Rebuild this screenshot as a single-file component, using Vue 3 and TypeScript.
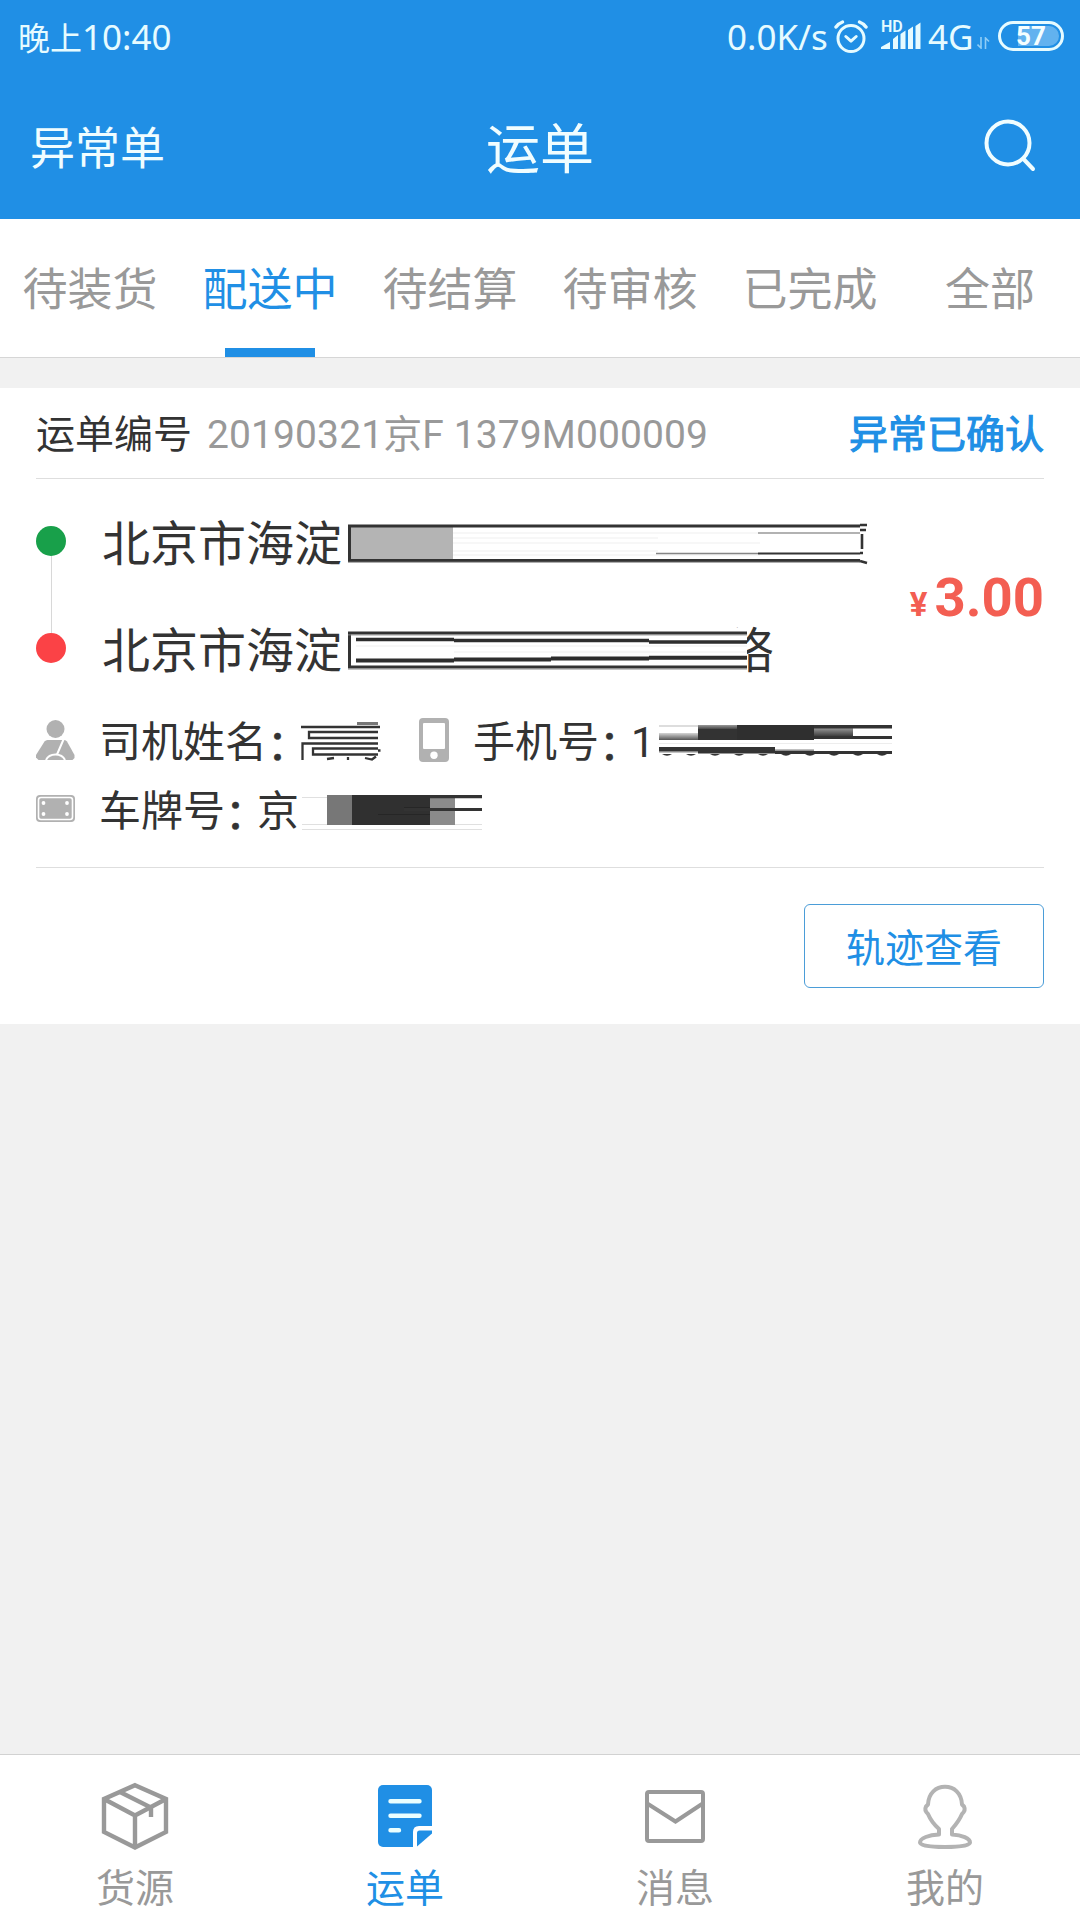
<script setup lang="ts">
import { ref } from 'vue'

interface NavItem {
  key: string
  label: string
}

const tabs: string[] = ['待装货', '配送中', '待结算', '待审核', '已完成', '全部']
const activeTab = ref(1)

const navItems: NavItem[] = [
  { key: 'goods', label: '货源' },
  { key: 'waybill', label: '运单' },
  { key: 'message', label: '消息' },
  { key: 'mine', label: '我的' },
]
const activeNav = ref('waybill')

const digitArcs: number[] = [8, 32, 56, 80, 104, 127, 151, 175, 199, 223]
</script>

<template>
  <div class="screen">
    <header class="header">
      <div class="status">
        <div class="clock"><span class="clock-cn">晚上</span>10:40</div>
        <div class="status-right">
          <span class="speed">0.0K/s</span>
          <svg class="alarm" width="34" height="34" viewBox="0 0 34 34" fill="none" stroke="#e6fbff" stroke-width="3" stroke-linecap="round" stroke-linejoin="round">
            <circle cx="17" cy="18.5" r="13" />
            <path d="M11.8 16.5l5.2 4.7 5.2-4.7" />
            <path d="M2 7q2.6-3.600 6.500-5M32 7q-2.600-3.600-6.500-5" stroke-width="3.400" />
          </svg>
          <div class="signal">
            <svg width="40" height="28" viewBox="0 0 40 28" fill="#e6fbff">
              <path d="M0 27v-2l9-5v7zM12 27V17l5-4v14zM19.500 27V12l5-3.500v18.500zM27 27V8l5-3.500v22.500zM34.500 27V4l5-3.500V27z" />
            </svg>
            <span class="hd">HD</span>
          </div>
          <span class="net">4G</span>
          <svg class="updown" width="13" height="12" viewBox="0 0 13 12" fill="none" stroke="#8fcdf6" stroke-width="1.600">
            <path d="M4 0v11L.5 7.500M8.500 12V1L12 4.500" />
          </svg>
          <div class="battery">
            <div class="battery-level"></div>
            <span>57</span>
          </div>
        </div>
      </div>
      <div class="titlebar">
        <span class="side">异常单</span>
        <span class="title">运单</span>
        <span class="search">
          <svg width="52" height="54" viewBox="0 0 52 54" fill="none" stroke="#f0fdff" stroke-width="4" stroke-linecap="round">
            <circle cx="24" cy="25" r="21.500" />
            <path d="M39.500 41l9.500 10" />
          </svg>
        </span>
      </div>
    </header>

    <nav class="tabs">
      <div v-for="(tab, i) in tabs" :key="tab" class="tab" :class="{ active: i === activeTab }" @click="activeTab = i">
        <span>{{ tab }}</span>
      </div>
    </nav>

    <main class="content">
      <section class="card">
        <div class="card-head">
          <span class="no-label">运单编号</span>
          <span class="no-value">20190321京F 1379M000009</span>
          <span class="state">异常已确认</span>
        </div>

        <div class="route">
          <div class="rail">
            <i class="dot green"></i>
            <i class="line"></i>
            <i class="dot red"></i>
          </div>
          <div class="addresses">
            <div class="address">
              <span class="place">北京市海淀</span>
              <svg class="mask-a" width="520" height="44" viewBox="0 0 520 44">
                <rect x="3" y="6" width="102" height="32" fill="#b4b4b4" />
                <path d="M105 12h307M105 17h205M105 22h307M105 30h205M105 34h307" stroke="#efefef" />
                <path d="M410 12h102" stroke="#999" stroke-width="1.500" />
                <path d="M308 32.500h102" stroke="#858585" stroke-width="1.500" />
                <path d="M410 32.500h102" stroke="#333" stroke-width="2.200" />
                <path d="M512 5H1.500v34.500H512" fill="none" stroke="#333" stroke-width="3" />
                <path d="M0 41.200h512" stroke="#888" />
                <path d="M512 4h7M512 9h6M514 13v15M512 32h3M512 40l7 2" stroke="#333" stroke-width="2.600" fill="none" />
              </svg>
            </div>
            <div class="address">
              <span class="place">北京市海淀</span>
              <svg class="mask-b" width="399" height="44" viewBox="0 0 399 44">
                <path d="M399 5H1.500v34H399" fill="none" stroke="#333" stroke-width="3" />
                <path d="M0 6.900h399M0 41h399" stroke="#888" />
                <path d="M8 11.500h98M106 12.500h195M301 14h98" stroke="#2d2d2d" stroke-width="3.400" />
                <path d="M8 32.500h98M106 31.500h97M203 30.500h98M301 29.700h98" stroke="#2d2d2d" stroke-width="4" />
                <path d="M8 18h391M106 24h293" stroke="#efefef" />
              </svg>
              <span class="place tail">络</span>
            </div>
          </div>
          <div class="price"><span class="yen">¥</span>3.00</div>
        </div>

        <div class="info">
          <svg class="ico" width="39" height="40" viewBox="0 0 39 40">
            <circle cx="19.500" cy="9" r="9" fill="#b1b1b1" />
            <path d="M11.500 20h17q1.500 0 2.500 1.500l7.500 13.500v3l-2 2h-34L0 37.500V35l8.500-13.500q1.200-1.500 3-1.500z" fill="#b1b1b1" />
            <path d="M27.500 19.500L21 34.500M10 40q2.500-5.500 9.500-5.500T29 40" fill="none" stroke="#fff" stroke-width="2" />
          </svg>
          <span class="label">司机姓名<em>：</em></span>
          <svg class="mask-name" width="80" height="44" viewBox="0 0 80 44" fill="none" stroke="#333" stroke-width="2.300">
            <path d="M56 5.500h21" stroke="#777" stroke-width="3" />
            <path d="M0 9h79M77 14H8v6h69M1.500 42V25.500H77M77 30.500H12v6h65M77 32.500h2.500" />
            <path d="M26 41l7-1M47 39v3M64 40l7 1.500 4-3" />
          </svg>
          <svg class="phone" width="30" height="44" viewBox="0 0 30 44">
            <rect width="30" height="44" rx="4" fill="#b1b1b1" />
            <rect x="4" y="5" width="22" height="26" rx="1" fill="#fff" />
            <circle cx="15" cy="37.300" r="3.700" fill="#fff" />
          </svg>
          <span class="label second">手机号<em>：</em>1</span>
          <svg class="mask-phone" width="233" height="38" viewBox="0 0 233 38">
            <defs>
              <linearGradient id="fade" x1="0" y1="0" x2="0" y2="1">
                <stop offset="0" stop-color="#d5d5d5" />
                <stop offset="1" stop-color="#555" />
              </linearGradient>
              <linearGradient id="fadeDark" x1="0" y1="0" x2="0" y2="1">
                <stop offset="0" stop-color="#999" />
                <stop offset="1" stop-color="#333" />
              </linearGradient>
            </defs>
            <rect y="4" width="39" height="2" fill="#ddd" />
            <rect y="12" width="39" height="7" fill="url(#fade)" />
            <rect x="39" y="4" width="39" height="5" fill="url(#fadeDark)" />
            <rect x="39" y="8" width="39" height="11" fill="#333" />
            <rect x="78" y="4" width="77" height="15" fill="#2f2f2f" />
            <rect x="155" y="7" width="39" height="9" fill="url(#fadeDark)" />
            <rect x="155" y="4" width="78" height="3.500" fill="#333" />
            <rect x="155" y="15" width="78" height="3" fill="#333" />
            <rect y="22" width="233" height="1" fill="#ededed" />
            <rect x="0" y="26" width="39" height="4" fill="#333" />
            <rect x="0" y="30" width="39" height="1.500" fill="#888" />
            <rect x="39" y="26" width="77" height="6.500" fill="#333" />
            <rect x="116" y="28" width="39" height="3" fill="url(#fade)" />
            <rect x="116" y="30" width="117" height="3" fill="#333" />
            <path v-for="x in digitArcs" :key="x" :d="`M${x - 5} 33q5 3.500 10 0z`" fill="#333" />
          </svg>
        </div>

        <div class="info plate-row">
          <svg class="ico" width="39" height="27" viewBox="0 0 39 27">
            <rect width="39" height="27" rx="4" fill="#b1b1b1" />
            <rect x="2.500" y="2.500" width="34" height="22" rx="2.500" fill="none" stroke="#fff" stroke-width="1.600" />
            <g fill="#fff">
              <circle cx="7.500" cy="8" r="1.900" /><circle cx="31" cy="8" r="1.900" />
              <circle cx="7.500" cy="19" r="1.900" /><circle cx="31" cy="19" r="1.900" />
            </g>
          </svg>
          <span class="label">车牌号<em>：</em>京</span>
          <svg class="mask-plate" width="180" height="36" viewBox="0 0 180 36">
            <path d="M0 3.500h25M0 30.500h180M0 35.500h180" stroke="#e0e0e0" />
            <rect x="25" y="1" width="25" height="30" fill="#777" />
            <rect x="50" y="1" width="78" height="30" fill="#303030" />
            <rect x="128" y="1" width="25" height="30" fill="#8b8b8b" />
            <path d="M128 2.700h52M102 15.500h78" stroke="#333" stroke-width="3.200" />
            <path d="M102 13.500h26M76 20.500h52" stroke="#262626" />
          </svg>
        </div>

        <div class="actions">
          <button class="track">轨迹查看</button>
        </div>
      </section>
    </main>

    <footer class="bottom">
      <div v-for="item in navItems" :key="item.key" class="nav-item" :class="{ on: item.key === activeNav }" @click="activeNav = item.key">
        <svg v-if="item.key === 'goods'" width="68" height="68" viewBox="0 0 68 68" fill="none" stroke="#999" stroke-width="4.400">
          <path d="M34 3.200L65 17v33L34 65.500 3 50V17zM3 17l31 16.500L65 17M34 33v32" />
          <path d="M19 10l31 15.500V35" />
        </svg>
        <svg v-else-if="item.key === 'waybill'" width="68" height="68" viewBox="0 0 68 68">
          <path d="M12 3h44a5 5 0 0 1 5 5v38L46 65H12a5 5 0 0 1-5-5V8a5 5 0 0 1 5-5z" fill="#208fe5" />
          <path d="M42 67V50q0-6 6-6h15v8L48 67z" fill="#fff" />
          <path d="M46 64.500V51q0-2.500 2.500-2.500H61v3z" fill="#208fe5" />
          <path d="M19.500 19.200h29M19.500 33.700h29M19.500 48.300h8.500" stroke="#eaffff" stroke-width="4.400" stroke-linecap="round" />
        </svg>
        <svg v-else-if="item.key === 'message'" width="68" height="68" viewBox="0 0 68 68" fill="none" stroke="#999" stroke-width="4">
          <rect x="6" y="10" width="56" height="49" rx="2" />
          <path d="M7 22l27.500 17.500L61 22" />
        </svg>
        <svg v-else width="68" height="68" viewBox="0 0 68 68" fill="none" stroke="#b3b3b3" stroke-width="4" stroke-linejoin="round">
          <path d="M28 52.500v-5.500c-5-4.500-8.500-9-11-15q-4-3.500-2-7.500l2-2C17.500 11 25 4.800 34 4.800s16.500 6.200 17 17.700l2 2q2 4-2 7.500c-2.500 6-6 10.500-10 15v5.500c10 .5 18 4 18 8 0 3.500-11 4.500-25 4.500S9 64 9 60.500c0-4.500 9-7.500 19-8z" />
        </svg>
        <span>{{ item.label }}</span>
      </div>
    </footer>
  </div>
</template>

<style>
body {
  margin: 0;
}
</style>

<style scoped>
.screen {
  display: flex;
  flex-direction: column;
  width: 1080px;
  height: 1920px;
  overflow: hidden;
  background: #f1f1f1;
  color: #333;
  font-family: Roboto, "Noto Sans CJK SC", sans-serif;
}
.screen svg {
  display: block;
  flex: none;
}
.header {
  height: 219px;
  flex: none;
  background: #208fe5;
  color: #f0fdff;
}
.status {
  display: flex;
  justify-content: space-between;
  height: 74px;
  padding: 0 16px 0 18px;
  color: #e6fbff;
  font-family: "Noto Sans", "Noto Sans CJK SC", sans-serif;
  font-size: 35px;
  line-height: 74px;
  white-space: nowrap;
}
.clock-cn {
  font-size: 32px;
}
.status-right {
  display: flex;
  align-items: center;
}
.speed {
  width: 107px;
}
.alarm {
  margin-right: 13px;
}
.signal {
  position: relative;
  width: 47px;
}
.signal svg {
  margin-top: -2px;
}
.hd {
  position: absolute;
  left: 0;
  top: -5px;
  font-size: 16px;
  font-weight: 600;
  line-height: 16px;
  font-family: Roboto, sans-serif;
}
.net {
  width: 49px;
}
.updown {
  margin: 12px 8px 0 0;
}
.battery {
  position: relative;
  box-sizing: border-box;
  width: 66px;
  height: 30px;
  margin-top: -2px;
  border: 3px solid #e6fbff;
  border-radius: 15px;
  color: #f4feff;
  font: 700 26px/25px Roboto, sans-serif;
  text-align: center;
}
.battery-level {
  position: absolute;
  inset: 2px 2px 2px 17px;
  border-radius: 0 10px 10px 0;
  background: #62b2ef;
}
.battery span {
  position: relative;
}
.titlebar {
  display: grid;
  grid-template-columns: 1fr auto 1fr;
  align-items: center;
  height: 142px;
  padding: 0 44px 0 30px;
}
.side {
  font-size: 45px;
}
.title {
  font-size: 54px;
  margin-left: 14px;
}
.search {
  justify-self: end;
}
.tabs {
  display: grid;
  grid-template-columns: repeat(6, 1fr);
  height: 138px;
  flex: none;
  background: #fff;
  border-bottom: 1px solid #d6d6d6;
}
.tab {
  display: flex;
  flex-direction: column;
  align-items: center;
  justify-content: space-between;
  color: #999;
  font-size: 45px;
  line-height: 144px;
}
.tab span {
  height: 129px;
}
.tab.active {
  color: #208fe5;
}
.tab.active::after {
  content: "";
  width: 90px;
  height: 9px;
  background: #208fe5;
}
.content {
  flex: 1;
  padding-top: 30px;
}
.card {
  height: 636px;
  padding: 0 36px;
  background: #fff;
}
.card-head {
  display: flex;
  align-items: center;
  box-sizing: border-box;
  height: 91px;
  padding-bottom: 4px;
  border-bottom: 1px solid #dedede;
  font-size: 39px;
}
.no-value {
  margin-left: 15px;
  color: #999;
  letter-spacing: 0.1px;
}
.state {
  margin-left: auto;
  color: #208fe5;
  -webkit-text-stroke: 1.1px #208fe5;
}
.route {
  display: flex;
  height: 214px;
  padding-top: 10px;
}
.rail {
  display: flex;
  flex-direction: column;
  align-items: center;
  width: 30px;
  padding-top: 37px;
}
.dot {
  width: 30px;
  height: 30px;
  border-radius: 50%;
}
.green {
  background: #18a04a;
}
.red {
  background: #fb4246;
}
.line {
  width: 1px;
  height: 77px;
  background: #d8d8d8;
}
.addresses {
  width: 790px;
  margin-left: 36px;
}
.address {
  display: flex;
  align-items: center;
  height: 107px;
  font-size: 48px;
  white-space: nowrap;
}
.place {
  padding-bottom: 5px;
}
.mask-a,
.mask-b {
  margin-left: 6px;
}
.mask-b {
  position: relative;
  z-index: 1;
  background: #fff;
}
.tail {
  margin-left: -21px;
}
.price {
  margin-left: auto;
  color: #f35e52;
  font-size: 54.5px;
  font-weight: 700;
  line-height: 216px;
  white-space: nowrap;
}
.yen {
  margin-right: 7px;
  font-size: 33px;
}
.info {
  display: flex;
  align-items: center;
  height: 69px;
  font-size: 42px;
  white-space: nowrap;
  padding-top: 4px;
  box-sizing: border-box;
}
.plate-row {
  padding-top: 3px;
}
.info .label {
  margin-left: 24px;
  padding-bottom: 2px;
}
.info em {
  position: relative;
  top: 3px;
  letter-spacing: -10px;
  font-style: normal;
  -webkit-text-stroke: 0.6px #333;
}
.mask-name {
  margin-left: 2px;
}
.phone {
  margin-left: 38px;
}
.mask-phone {
  margin-left: 4px;
}
.mask-plate {
  margin: 7px 0 0 3px;
}
.actions {
  display: flex;
  justify-content: flex-end;
  margin-top: 26px;
  padding-top: 36px;
  border-top: 1px solid #dedede;
}
.track {
  box-sizing: border-box;
  width: 240px;
  height: 84px;
  padding: 0 0 3px;
  border: 1px solid #4b9dd8;
  border-radius: 6px;
  background: #fff;
  color: #208fe5;
  font: 39px Roboto, "Noto Sans CJK SC", sans-serif;
}
.bottom {
  display: grid;
  grid-template-columns: repeat(4, 1fr);
  box-sizing: border-box;
  height: 166px;
  flex: none;
  border-top: 1px solid #d2d2d2;
  background: #fff;
}
.nav-item {
  display: flex;
  flex-direction: column;
  align-items: center;
  padding-top: 27px;
  color: #999;
  font-size: 39px;
  line-height: 50px;
}
.nav-item span {
  margin-top: 14px;
}
.nav-item.on {
  color: #208fe5;
}
</style>
